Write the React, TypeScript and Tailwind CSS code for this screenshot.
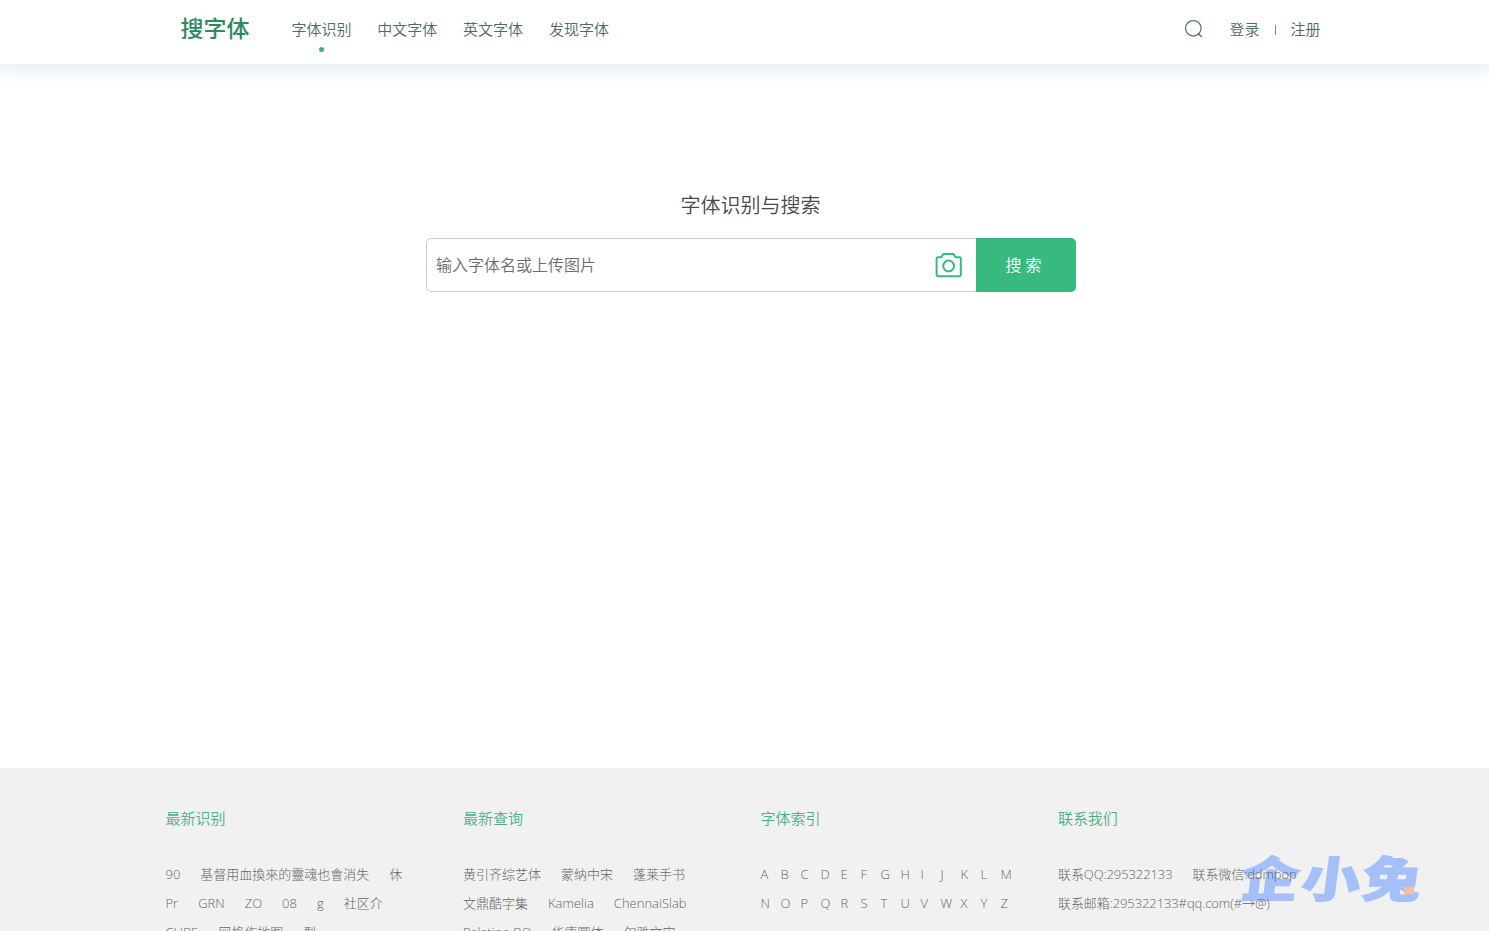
import clsx from "clsx";

const navItems = ["字体识别", "中文字体", "英文字体", "发现字体"];

const recentRows = [
  ["90", "基督用血換來的靈魂也會消失", "休"],
  ["Pr", "GRN", "ZO", "08", "g", "社区介"],
  ["CUBE", "网格作地图", "型"],
];

const queryRows = [
  ["黄引齐综艺体", "蒙纳中宋", "蓬莱手书"],
  ["文鼎酷字集", "Kamelia", "ChennaiSlab"],
  ["Palatino BO", "华康圆体", "尔雅文宋"],
];

const contactRows = [["联系QQ:295322133", "联系微信:ddmpop"], ["联系邮箱:295322133#qq.com(#→@)"]];

const letters = "ABCDEFGHIJKLMNOPQRSTUVWXYZ".split("");

function SearchIcon() {
  return (
    <svg className="h-5 w-5" viewBox="0 0 20 20" fill="none" stroke="#557568" strokeWidth="1.25">
      <circle cx="9.3" cy="9.3" r="7.8" />
      <path d="M14 14.2l4 3.8" />
    </svg>
  );
}

function CameraIcon() {
  return (
    <svg className="h-[26px] w-7" viewBox="0 0 28 26" fill="none" stroke="#38b97f" strokeWidth="2" strokeLinejoin="round">
      <path d="M3 5.2h3.2l2.3-3.3h9.8l2.3 3.3h3.8a1.4 1.4 0 0 1 1.4 1.4v16.2a1.4 1.4 0 0 1-1.4 1.4H3a1.4 1.4 0 0 1-1.4-1.4V6.6A1.4 1.4 0 0 1 3 5.2z" />
      <circle cx="13.6" cy="14" r="5.4" />
    </svg>
  );
}

function Header() {
  return (
    <header className="flex h-16 shrink-0 items-start bg-white pl-[180.5px] shadow-[0_2px_14px_4px_rgba(60,115,150,0.13)]">
      <a className="mt-3 w-[111px] text-[23px] leading-8 font-medium text-[#2c8a60]">搜字体</a>
      <nav className="flex gap-[25.8px] pt-[18px] text-[15px] leading-[22px] font-[350] text-[#4d6d60]">
        {navItems.map((item, i) => (
          <a key={item} className="flex w-[60px] flex-col items-center whitespace-nowrap">
            {item}
            <span className={clsx("mt-[7px] h-[5px] w-[5px] rounded-full", i === 0 && "bg-[#38b089]")} />
          </a>
        ))}
      </nav>
      <div className="mr-[168.5px] ml-auto flex items-center pt-[18px] text-[15px] leading-[22px] font-[350] text-[#4d6d60]">
        <SearchIcon />
        <a className="ml-[25px]">登录</a>
        <span className="mr-[14.5px] ml-[15.5px] mt-0.5 h-2.5 w-px bg-[#6f8c80]" />
        <a>注册</a>
      </div>
    </header>
  );
}

function FooterTitle({ children }: { children: string }) {
  return <h3 className="mb-[31px] text-[15px] leading-[22px] font-[350] text-[#4cb084]">{children}</h3>;
}

function LinkColumn({ title, rows }: { title: string; rows: string[][] }) {
  return (
    <section className="w-[297.5px] shrink-0">
      <FooterTitle>{title}</FooterTitle>
      {rows.map((row) => (
        <div key={row[0]} className="flex h-[29px] gap-5 whitespace-nowrap">
          {row.map((text) => (
            <a key={text}>{text}</a>
          ))}
        </div>
      ))}
    </section>
  );
}

function Watermark() {
  return (
    <div className="absolute top-[83px] left-[1241px] h-14 w-[182px] text-[#a5bffb]">
      <div className="origin-left [transform:scale(1.01,0.83)_skewX(-6deg)] text-[58px] leading-[56px] font-black tracking-[2.5px] whitespace-nowrap [-webkit-text-stroke:1.5px_#a5bffb]">
        企小兔
      </div>
      <span className="absolute top-[36px] left-[163px] h-[7px] w-2.5 -skew-x-6 bg-[#f7bea5]" />
    </div>
  );
}

export default function App() {
  return (
    <div className="flex h-[931px] w-[1489px] flex-col overflow-hidden bg-white font-['Open_Sans','Noto_Sans_CJK_SC',sans-serif]">
      <Header />
      <main className="flex h-[704px] shrink-0 flex-col items-center pt-[127px] pl-3">
        <h1 className="text-[20px] leading-[30px] font-[350] text-[#484848]">字体识别与搜索</h1>
        <form className="mt-[17px] flex h-[54px] w-[650px]">
          <div className="flex w-[550px] items-center rounded-l-[5px] border border-r-0 border-[#ccc] pr-[13px] pl-[9.5px]">
            <input
              className="min-w-0 flex-1 text-[16px] font-[350] text-[#555] outline-none placeholder:text-[#6c6c6c]"
              placeholder="输入字体名或上传图片"
            />
            <CameraIcon />
          </div>
          <button type="button" className="w-[100px] rounded-r-[5px] bg-[#38b97f] pr-1 text-[16px] font-[350] text-white">
            搜 索
          </button>
        </form>
      </main>
      <footer className="relative flex h-[163px] shrink-0 bg-[#f1f1f1] pt-[39px] pl-[165.5px] text-[13px] leading-[29px] font-light text-[#666]">
        <Watermark />
        <LinkColumn title="最新识别" rows={recentRows} />
        <LinkColumn title="最新查询" rows={queryRows} />
        <section className="w-[297.5px] shrink-0">
          <FooterTitle>字体索引</FooterTitle>
          <div className="grid w-[260px] grid-cols-13">
            {letters.map((letter) => (
              <a key={letter}>{letter}</a>
            ))}
          </div>
        </section>
        <div className="relative tracking-[-0.09px]">
          <LinkColumn title="联系我们" rows={contactRows} />
        </div>
      </footer>
    </div>
  );
}
